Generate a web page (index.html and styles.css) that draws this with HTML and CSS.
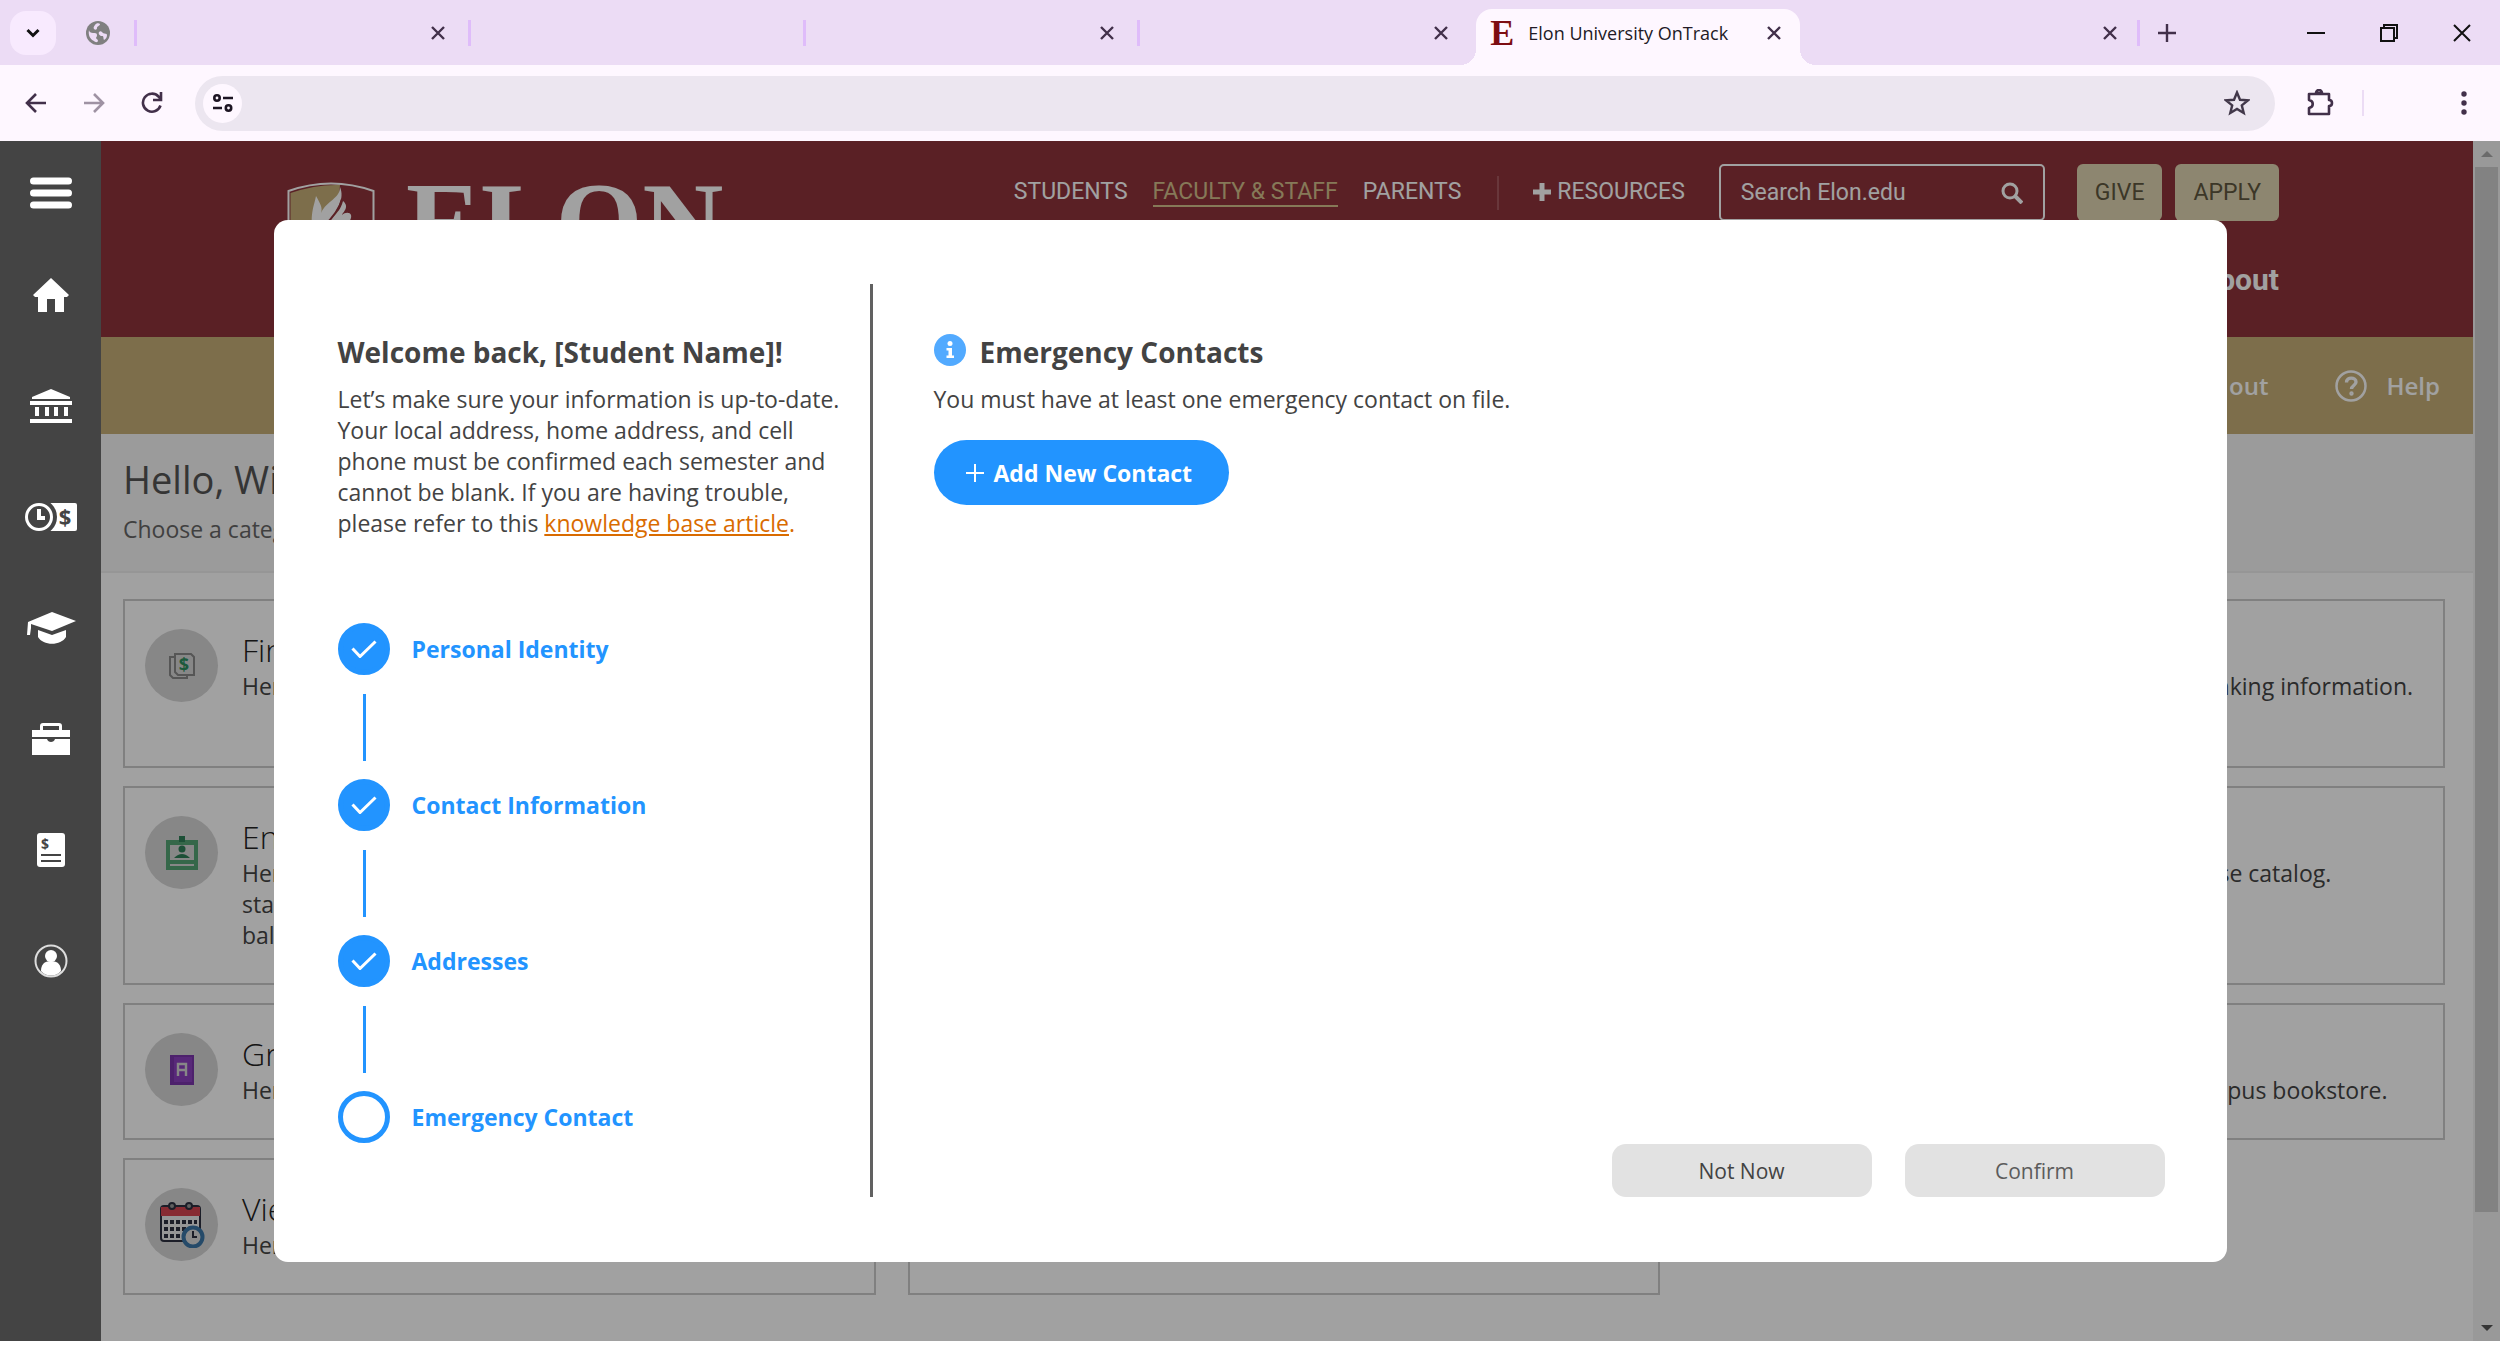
FILE: index.html
```html
<!DOCTYPE html>
<html lang="en">
<head>
    <meta charset="UTF-8">
    <meta name="viewport" content="width=device-width, initial-scale=1.0">
    <title>Elon University OnTrack</title>
    <link rel="stylesheet" href="styles.css">
</head>
<body>

    <!-- Browser frame -->
    <div class="tab-strip">
        <button class="tab-search" aria-label="Search tabs">
            <svg width="14" height="10" viewBox="0 0 14 10"><path d="M1.500 2l5.500 5.500L12.500 2" fill="none" stroke="#111" stroke-width="3"/></svg>
        </button>
        <svg class="globe" width="24" height="24" viewBox="0 0 24 24">
            <circle cx="12" cy="12" r="12" fill="#808080"/>
            <path d="M3 9c0 2 2 3 4 3s4 0 4 2-1 2-1 3 2 1 2 3c-1 2-3 1-4 0C4 18 2 14 3 9zM9 4c1-2 4-2 5-1 0 2-3 2-3 4s-2 2-3 1 0-3 1-4zM13 11c2-2 3 0 4 1s4 0 4 2-1 4-3 5c-1-2 0-4-2-4s-4-2-3-4z" fill="#eddcf6"/>
        </svg>
        <div class="tabs">
            <div class="tab"><button class="tab-close" aria-label="Close tab"><svg width="14" height="14" viewBox="0 0 14 14"><path d="M1 1l12 12M13 1L1 13"/></svg></button></div>
            <div class="tab"></div>
            <div class="tab"><button class="tab-close" aria-label="Close tab"><svg width="14" height="14" viewBox="0 0 14 14"><path d="M1 1l12 12M13 1L1 13"/></svg></button></div>
            <div class="tab"><button class="tab-close" aria-label="Close tab"><svg width="14" height="14" viewBox="0 0 14 14"><path d="M1 1l12 12M13 1L1 13"/></svg></button></div>
            <div class="tab active">
                <span class="favicon">E</span>
                <span class="tab-title">Elon University OnTrack</span>
                <button class="tab-close" aria-label="Close tab"><svg width="14" height="14" viewBox="0 0 14 14"><path d="M1 1l12 12M13 1L1 13"/></svg></button>
            </div>
            <div class="tab plain"><button class="tab-close" aria-label="Close tab"><svg width="14" height="14" viewBox="0 0 14 14"><path d="M1 1l12 12M13 1L1 13"/></svg></button></div>
        </div>
        <button class="new-tab" aria-label="New tab"><svg width="18" height="18" viewBox="0 0 18 18"><path d="M9 0v18M0 9h18" stroke="#42304a" stroke-width="2.400"/></svg></button>
        <div class="window-buttons">
            <button aria-label="Minimize"><svg width="18" height="18" viewBox="0 0 18 18"><path d="M0 9h18"/></svg></button>
            <button aria-label="Restore"><svg width="18" height="18" viewBox="0 0 18 18"><path d="M1 4h13v13H1zM4 4V1h13v13h-3"/></svg></button>
            <button aria-label="Close"><svg width="18" height="18" viewBox="0 0 18 18"><path d="M1 1l16 16M17 1L1 17"/></svg></button>
        </div>
    </div>

    <div class="toolbar">
        <button aria-label="Back"><svg width="22" height="22" viewBox="0 0 22 22"><path d="M21 11H2M11 2l-9 9 9 9"/></svg></button>
        <button class="disabled" aria-label="Forward"><svg width="22" height="22" viewBox="0 0 22 22"><path d="M1 11h19M11 2l9 9-9 9"/></svg></button>
        <button class="reload" aria-label="Reload"><svg width="22" height="22" viewBox="0 0 22 22"><path d="M19.500 13.500A9 9 0 1 1 17.500 4.500L20 7M20 0v8h-8"/></svg></button>
        <div class="address-bar">
            <span class="site-info">
                <svg width="20" height="20" viewBox="0 0 20 20" fill="none" stroke="#1d1523" stroke-width="2.600"><circle cx="4" cy="5" r="2.700"/><path d="M10 5h10M0 15h9"/><circle cx="15.500" cy="15" r="2.700"/></svg>
            </span>
            <input type="text" aria-label="Address">
            <svg class="star" width="26" height="26" viewBox="0 0 26 26"><path d="M13 2.500l3 7.300 7.800.6-6 5 1.900 7.600-6.700-4.100L6.300 23l1.900-7.600-6-5 7.800-.6z" fill="none" stroke="#42384a" stroke-width="2.400"/></svg>
        </div>
        <button class="extensions" aria-label="Extensions"><svg width="28" height="28" viewBox="0 0 28 28"><path d="M3 5h20v6c4 0 4 6 0 6v8H3v-6c5-1 5-7 0-8z" stroke-linejoin="round"/><path d="M10 4a3 3 0 0 1 6 0z" fill="#42304a"/></svg></button>
        <span class="divider"></span>
        <button class="more" aria-label="Menu"><svg width="6" height="24" viewBox="0 0 6 24"><g fill="#42304a" stroke="none"><circle cx="3" cy="3" r="2.700"/><circle cx="3" cy="12" r="2.700"/><circle cx="3" cy="21" r="2.700"/></g></svg></button>
    </div>

    <div class="viewport">

        <!-- Left icon menu -->
        <nav class="sidebar">
            <a href="#" class="menu" aria-label="Menu"><svg width="42" height="32" viewBox="0 0 42 32"><path d="M3.500 4h35M3.500 16h35M3.500 28h35" stroke="#fff" stroke-width="7" stroke-linecap="round"/></svg></a>
            <a href="#" aria-label="Home"><svg width="36" height="34" viewBox="0 0 36 34"><path d="M18 0l18 17-2 2h-3v15h-9V21h-8v13H5V19H2l-2-2z"/></svg></a>
            <a href="#" aria-label="Banking"><svg width="42" height="34" viewBox="0 0 42 34"><path d="M21 0l19 8v2H2V8zM0 12h42v4H0zM5 18h4v9H5zM15 18h4v9h-4zM24 18h4v9h-4zM34 18h4v9h-4zM0 30h42v4H0z"/></svg></a>
            <a href="#" aria-label="Time and pay">
                <svg width="52" height="30" viewBox="0 0 52 30">
                    <rect x="24" y="1" width="28" height="28" rx="2"/>
                    <circle cx="14" cy="15" r="18" fill="#444"/>
                    <circle cx="14" cy="15" r="12.500" fill="none" stroke="#fff" stroke-width="3"/>
                    <path d="M14 7v9h6" fill="none" stroke="#fff" stroke-width="4"/>
                    <text x="40" y="23" class="dollar big">$</text>
                </svg>
            </a>
            <a href="#" aria-label="Academics"><svg width="50" height="32" viewBox="0 0 50 32"><path d="M26 0l24 9-24 10L5 12v4l-1 7H1l1-13zM12 18l14 5 14-5v7c-5 9-23 9-28 0z"/></svg></a>
            <a href="#" aria-label="Employment"><svg width="38" height="32" viewBox="0 0 38 32"><path d="M8 7V3c0-2 1-3 3-3h16c2 0 3 1 3 3v4h8v7H0V7zm3 0h16V3H11zM0 16h15c1 4 7 4 8 0h15v16H0z"/></svg></a>
            <a href="#" aria-label="Statements">
                <svg width="28" height="34" viewBox="0 0 28 34">
                    <rect width="28" height="34" rx="3"/>
                    <path d="M4 22h20M4 28h20" stroke="#444" stroke-width="2"/>
                    <text x="8" y="16" class="dollar">$</text>
                </svg>
            </a>
            <a href="#" aria-label="Profile"><svg width="36" height="34" viewBox="0 0 36 34"><circle cx="18" cy="17" r="15.500" fill="none" stroke="#ddd" stroke-width="2"/><circle cx="18" cy="12" r="6"/><path d="M8 27c0-6 3-10 10-10s10 4 10 10c-5 6-15 6-20 0z"/></svg></a>
        </nav>

        <div class="page">
            <div class="site">
                <header class="site-header">
                    <div class="logo">
                        <svg width="88" height="100" viewBox="0 0 88 100">
                            <path d="M1.500 9Q44-6 86.500 9v51Q80 86 44 98 8 86 1.500 60z" fill="#8f343c" stroke="#fff" stroke-width="2"/>
                            <path d="M3.500 11Q30 2 53 3L44 96Q10 84 3.500 60z" fill="#c6af77"/>
                            <path d="M30 60C20 38 27 25 29 14c4 7 7 12 5 17C40 18 53 17 53 5c5 12-3 22-9 32 6-6 10-10 12-18 7 6 0 11-1 14 3-3 8-3 9 0 2 7-12 16-22 27z" fill="#fff"/>
                            <path d="M55 17Q52 30 36 45" fill="none" stroke="#8f343c" stroke-width="2"/>
                        </svg>
                        <span class="logo-name">ELON</span>
                    </div>
                    <div class="header-right">
                        <div class="top-links">
                            <a href="#">STUDENTS</a>
                            <a href="#" class="current">FACULTY &amp; STAFF</a>
                            <a href="#">PARENTS</a>
                            <span class="bar"></span>
                            <a href="#" class="resources"><svg width="18" height="18" viewBox="0 0 18 18"><path d="M9 0v18M0 9h18" stroke="#fff" stroke-width="5"/></svg> RESOURCES</a>
                            <div class="search">
                                <input type="text" placeholder="Search Elon.edu" aria-label="Search Elon.edu">
                                <svg width="22" height="22" viewBox="0 0 22 22" fill="none" stroke="#fff"><circle cx="9" cy="9" r="7" stroke-width="3"/><path d="M14 14l7 7" stroke-width="4"/></svg>
                            </div>
                            <button class="gold-btn">GIVE</button>
                            <button class="gold-btn">APPLY</button>
                        </div>
                        <a href="#" class="about">About</a>
                    </div>
                </header>

                <div class="gold-bar">
                    <a href="#">Sign out</a>
                    <a href="#" class="help">
                        <svg width="32" height="32" viewBox="0 0 32 32" fill="none" stroke="#fff"><circle cx="16" cy="16" r="14.500" stroke-width="2.500"/><path d="M11.500 12.500c0-6 9.500-5.500 9.500-.5 0 3.500-4.500 3.500-4.500 7" stroke-width="3.400"/><circle cx="16.500" cy="23.500" r="1.200" stroke-width="2"/></svg>
                        Help
                    </a>
                </div>

                <div class="greeting">
                    <h1>Hello, Will</h1>
                    <p>Choose a category</p>
                </div>

                <div class="cards">
                    <div class="card tall">
                        <span class="card-icon">
                            <svg width="26" height="26" viewBox="0 0 26 26"><path d="M6 4H1v18l3 3h14v-3" fill="none" stroke="#888" stroke-width="2"/><path d="M6 1h16l3 3v18H9l-3-3z" fill="#d6d6d6" stroke="#888" stroke-width="2"/><text x="15" y="18" class="dollar green">$</text></svg>
                        </span>
                        <div><h2>Finances</h2><p>Here you can view your balance.</p></div>
                    </div>
                    <div class="card"></div>
                    <div class="card">
                        <div class="card-text"><h2>Payroll</h2><p>Here you can update payment and banking information.</p></div>
                    </div>

                    <div class="card">
                        <span class="card-icon">
                            <svg width="32" height="34" viewBox="0 0 32 34"><path d="M0 4h32v30H0zM4 9v15h24V9zM4 28v2h24v-2z" fill="#54a374" fill-rule="evenodd"/><path d="M13 0h6v6h-6z" fill="#2f7f58"/><circle cx="16" cy="13" r="3.500" fill="#2f7f58"/><path d="M8 22q8-8 16 0z" fill="#2f7f58"/></svg>
                        </span>
                        <div><h2>Enrollment</h2><p>Here you can view pay<br>statements and leave<br>balances.</p></div>
                    </div>
                    <div class="card"></div>
                    <div class="card">
                        <div class="card-text"><h2>Courses</h2><p>Here you can browse the current course catalog.</p></div>
                    </div>

                    <div class="card">
                        <span class="card-icon">
                            <svg width="24" height="30" viewBox="0 0 24 30"><path d="M0 0h24v30H0z" fill="#7a35ac"/><path d="M4 2h18v25H4z" fill="#8c40c0"/><path d="M8 21V9h8v12M8 15h8" fill="none" stroke="#d6d6d6" stroke-width="2.400"/></svg>
                        </span>
                        <div><h2>Grades</h2><p>Here you can view grades.</p></div>
                    </div>
                    <div class="card"></div>
                    <div class="card">
                        <div class="card-text"><h2>Books</h2><p>Here you can order texts from the campus bookstore.</p></div>
                    </div>

                    <div class="card">
                        <span class="card-icon">
                            <svg width="46" height="46" viewBox="0 0 46 46"><rect x="2" y="4" width="39" height="35" rx="3" fill="#eee" stroke="#2d3040" stroke-width="2"/><path d="M2 5h39v9H2z" fill="#d64550"/><path d="M5 20h33M5 27h33M5 34h22" stroke="#2d3040" stroke-width="4" stroke-dasharray="4 2"/><g fill="#999" stroke="#2d3040" stroke-width="2"><circle cx="13" cy="4" r="3"/><circle cx="30" cy="4" r="3"/></g><circle cx="34" cy="35" r="9.500" fill="#ddd" stroke="#3b76a6" stroke-width="4"/><path d="M34 29v6h4" fill="none" stroke="#2d3040" stroke-width="2"/></svg>
                        </span>
                        <div><h2>View Calendar</h2><p>Here you can view the daily events.</p></div>
                    </div>
                    <div class="card">
                        <span class="card-icon"></span>
                        <div><h2>Earnings</h2><p>Download pay stubs and earnings.</p></div>
                    </div>
                </div>
            </div>
            <div class="scrollbar">
                <svg width="12" height="6" viewBox="0 0 12 6"><path d="M0 6l6-6 6 6z" fill="#aaa"/></svg>
                <div class="track"><div class="thumb"></div></div>
                <svg width="12" height="6" viewBox="0 0 12 6"><path d="M0 0h12L6 6z" fill="#555"/></svg>
            </div>
        </div>

        <!-- Confirm information box -->
        <div class="modal-layer">
            <div class="modal" role="dialog" aria-labelledby="welcome-title">
                <div class="modal-left">
                    <h2 id="welcome-title">Welcome back, [Student Name]!</h2>
                    <p>Let’s make sure your information is up-to-date.<br>Your local address, home address, and cell<br>phone must be confirmed each semester and<br>cannot be blank. If you are having trouble,<br>please refer to this <span class="orange"><a href="#">knowledge base article</a>.</span></p>
                    <ol class="steps">
                        <li class="done"><span class="dot"><svg width="26" height="18" viewBox="0 0 26 18"><path d="M1.500 8.500l7.500 8L24.500 1.500" fill="none" stroke="#fff" stroke-width="3"/></svg></span>Personal Identity</li>
                        <li class="done"><span class="dot"><svg width="26" height="18" viewBox="0 0 26 18"><path d="M1.500 8.500l7.500 8L24.500 1.500" fill="none" stroke="#fff" stroke-width="3"/></svg></span>Contact Information</li>
                        <li class="done"><span class="dot"><svg width="26" height="18" viewBox="0 0 26 18"><path d="M1.500 8.500l7.500 8L24.500 1.500" fill="none" stroke="#fff" stroke-width="3"/></svg></span>Addresses</li>
                        <li><span class="dot"></span>Emergency Contact</li>
                    </ol>
                </div>
                <div class="modal-right">
                    <div class="contact-title">
                        <svg width="32" height="32" viewBox="0 0 32 32"><circle cx="16" cy="16" r="16" fill="#52aaff"/><circle cx="16" cy="9.500" r="2.500" fill="#fff"/><path d="M12.500 14h5.500v7.500h2V24h-7.500v-2.500h2v-5h-2z" fill="#fff"/></svg>
                        <h2>Emergency Contacts</h2>
                    </div>
                    <p>You must have at least one emergency contact on file.</p>
                    <button class="add-btn"><svg width="18" height="18" viewBox="0 0 18 18"><path d="M9 0v18M0 9h18" stroke="#fff" stroke-width="2"/></svg>Add New Contact</button>
                    <div class="modal-buttons">
                        <button id="not-now">Not Now</button>
                        <button id="confirm" class="confirm">Confirm</button>
                    </div>
                </div>
            </div>
        </div>
    </div>

</body>
</html>
```
FILE: styles.css
```css
* {
  margin: 0;
  padding: 0;
  box-sizing: border-box;
}
body {
  font-family: "Open Sans", sans-serif;
  font-size: 23px;
  height: 100vh;
  display: flex;
  flex-direction: column;
  background-color: #fff;
  overflow: hidden;
  padding-bottom: 13px;
}
button {
  font-family: inherit;
  border: none;
  background: none;
  cursor: pointer;
}
a {
  color: inherit;
  text-decoration: none;
}
input {
  font-family: inherit;
  border: none;
  background: none;
  outline: none;
}
svg {
  display: block;
  flex-shrink: 0;
}

/* Tab strip */
.tab-strip {
  display: flex;
  align-items: center;
  height: 65px;
  padding-left: 10px;
  background-color: #ecdcf5;
  flex-shrink: 0;
}
.tab-search {
  display: flex;
  align-items: center;
  justify-content: center;
  width: 46px;
  height: 44px;
  border-radius: 16px;
  background-color: #f8eafe;
}
.globe {
  margin: 0 24px 0 30px;
}
.tabs {
  display: grid;
  grid-template-columns: repeat(6, 1fr);
  flex: 1;
  align-self: stretch;
}
.tab {
  display: flex;
  align-items: center;
  justify-content: flex-end;
  padding-right: 23px;
  /* short divider at the left edge of each tab */
  background: linear-gradient(#dfbcfa, #dfbcfa) no-repeat left center / 3px 26px;
}
.tab.plain {
  background: linear-gradient(#dfbcfa, #dfbcfa) no-repeat right center / 3px 26px;
}
.tab.active {
  position: relative;
  justify-content: flex-start;
  background: #fef7ff;
  border-radius: 16px 16px 0 0;
  margin: 9px 6px 0 5px;
  padding: 0 19px 9px 14px;
}
.tab.active::before,
.tab.active::after {
  content: "";
  position: absolute;
  bottom: 0;
  width: 16px;
  height: 16px;
}
.tab.active::before {
  left: -16px;
  background: radial-gradient(circle at 0 0, transparent 16px, #fef7ff 16px);
}
.tab.active::after {
  right: -16px;
  background: radial-gradient(circle at 100% 0, transparent 16px, #fef7ff 16px);
}
.favicon {
  width: 24px;
  margin-right: 14px;
  font-family: "Liberation Serif", serif;
  font-size: 36px;
  line-height: 36px;
  font-weight: bold;
  color: #7d0d12;
}
.tab-title {
  flex: 1;
  font-size: 18px;
  color: #221a26;
  white-space: nowrap;
}
.tab-close path {
  stroke: #42304a;
  stroke-width: 2.4;
}
.new-tab {
  margin-left: 18px;
}
.window-buttons {
  display: flex;
  gap: 55px;
  margin: 0 29px 0 131px;
}
.window-buttons path {
  fill: none;
  stroke: #111;
  stroke-width: 2;
}

/* Toolbar */
.toolbar {
  display: flex;
  align-items: center;
  height: 76px;
  padding: 0 33px 0 25px;
  background-color: #fef7ff;
  flex-shrink: 0;
}
.toolbar button {
  margin-right: 36px;
}
.toolbar button path {
  fill: none;
  stroke: #42304a;
  stroke-width: 2.6;
}
.toolbar .disabled {
  opacity: 0.5;
}
.toolbar .reload {
  margin-right: 32px;
}
.address-bar {
  flex: 1;
  display: flex;
  align-items: center;
  height: 55px;
  padding: 0 25px 0 8px;
  border-radius: 28px;
  background-color: #ece6f0;
}
.address-bar input {
  flex: 1;
  font-size: 18px;
}
.site-info {
  display: flex;
  align-items: center;
  justify-content: center;
  width: 39px;
  height: 39px;
  border-radius: 50%;
  background-color: #fef7ff;
}
.toolbar .extensions {
  margin: 0 28px 0 31px;
}
.divider {
  width: 2px;
  height: 26px;
  margin-right: 97px;
  background-color: #ecdcf5;
}
.toolbar .more {
  margin-right: 0;
}

/* Page area */
.viewport {
  flex: 1;
  position: relative;
  display: flex;
  min-height: 0;
}
.sidebar {
  width: 101px;
  background-color: #444;
  flex-shrink: 0;
}
.sidebar a {
  display: flex;
  align-items: center;
  justify-content: center;
  height: 111px;
}
.sidebar .menu {
  height: 98px;
  padding-top: 5px;
}
.sidebar svg {
  fill: #fff;
}
.sidebar .dollar {
  fill: #444;
}
.dollar {
  font-family: "Open Sans", sans-serif;
  font-size: 14px;
  font-weight: bold;
  text-anchor: middle;
}
.dollar.big {
  font-size: 22px;
}
.dollar.green {
  font-size: 18px;
  fill: #2f8f60;
}
.page {
  flex: 1;
  position: relative;
  display: flex;
  background-color: #fff;
}
/* dark layer over the page */
.page::after {
  content: "";
  position: absolute;
  inset: 0;
  background-color: rgba(0, 0, 0, 0.37);
}
.site {
  flex: 1;
}
.site-header {
  display: flex;
  justify-content: space-between;
  height: 196px;
  padding: 23px 194px 0 186px;
  background-color: #8f343c;
  color: #fff;
}
.logo {
  display: flex;
  gap: 31px;
  padding-top: 18px;
}
.logo-name {
  font-family: "Liberation Serif", serif;
  font-size: 112px;
  line-height: 80px;
  font-weight: bold;
}
.header-right {
  font-family: Roboto, sans-serif;
  text-align: right;
}
.top-links {
  display: flex;
  align-items: center;
}
.top-links a {
  margin-right: 25px;
  border-bottom: 2px solid transparent;
}
.top-links .current {
  color: #d4c08c;
  border-color: #d4c08c;
}
.bar {
  width: 2px;
  height: 34px;
  margin: 0 34px 0 11px;
  background-color: #a6575e;
}
.top-links .resources {
  display: flex;
  align-items: center;
  gap: 6px;
  margin-right: 34px;
}
.search {
  display: flex;
  align-items: center;
  width: 326px;
  height: 57px;
  margin-right: 32px;
  padding: 0 20px;
  border: 2px solid #fff;
  border-radius: 5px;
}
.search input {
  flex: 1;
  min-width: 0;
  font-size: 23px;
}
.search input::placeholder {
  color: #fff;
}
.gold-btn {
  height: 57px;
  padding: 0 18px;
  border-radius: 6px;
  background-color: #e0d5b2;
  font-size: 23px;
  color: #5f573f;
}
.gold-btn + .gold-btn {
  margin-left: 13px;
}
.about {
  display: block;
  margin-top: 41px;
  font-size: 30px;
  font-weight: 700;
}
.gold-bar {
  display: flex;
  align-items: center;
  justify-content: flex-end;
  gap: 66px;
  height: 97px;
  padding-right: 33px;
  background-color: #c6af77;
  color: #fff;
  font-size: 24px;
  font-weight: 600;
}
.help {
  display: flex;
  align-items: center;
  gap: 20px;
}
.greeting {
  height: 139px;
  padding: 19px 22px;
  background-color: #f6f6f6;
  border-bottom: 2px solid #eee;
  color: #666;
}
.greeting h1 {
  font-size: 38px;
  line-height: 52px;
  font-weight: 400;
  color: #555;
}
.greeting p {
  line-height: 48px;
}
.cards {
  display: grid;
  grid-template-columns: repeat(3, 1fr);
  gap: 18px 32px;
  padding: 26px 28px 0 22px;
}
.card {
  display: flex;
  gap: 24px;
  padding: 28px 18px 32px 20px;
  border: 2px solid #cbcbcb;
  color: #444;
  line-height: 31px;
}
.card.tall {
  min-height: 169px;
}
.card h2 {
  font-size: 32px;
  line-height: 42px;
  font-weight: 300;
  color: #222;
}
.card p {
  white-space: nowrap;
}
.card-icon {
  display: flex;
  align-items: center;
  justify-content: center;
  width: 73px;
  height: 73px;
  border-radius: 50%;
  background-color: #d6d6d6;
  flex-shrink: 0;
}
.card-text {
  padding-left: 97px;
}
.scrollbar {
  display: flex;
  flex-direction: column;
  align-items: center;
  gap: 10px;
  width: 27px;
  padding: 10px 0;
  background-color: #f3f3f3;
}
.track {
  flex: 1;
}
.thumb {
  width: 23px;
  height: 91%;
  background-color: #cecece;
}

/* Modal */
.modal-layer {
  position: absolute;
  inset: 0;
  display: flex;
  justify-content: center;
  padding: 79px 0;
}
.modal {
  display: flex;
  width: calc(100% - 547px);
  padding: 64px 62px 65px 64px;
  border-radius: 14px;
  background-color: #fff;
  color: #434343;
}
.modal h2 {
  font-size: 28px;
  line-height: 36px;
  font-weight: 700;
}
.modal p {
  line-height: 31px;
  white-space: nowrap;
}
.modal-left {
  width: 535px;
  padding-top: 50px;
  border-right: 3px solid #616161;
}
.modal-left h2,
.contact-title {
  margin-bottom: 14px;
}
.orange {
  color: #d96b00;
}
.orange a {
  text-decoration: underline;
}
.steps {
  list-style: none;
  margin-top: 84px;
  color: #2294ff;
  font-weight: 700;
}
.steps li {
  position: relative;
  display: flex;
  align-items: center;
  gap: 22px;
  height: 52px;
  margin-bottom: 104px;
}
/* line down to the next step */
.steps .done::after {
  content: "";
  position: absolute;
  top: 71px;
  left: 25px;
  width: 3px;
  height: 67px;
  background-color: #2294ff;
}
.dot {
  display: flex;
  align-items: center;
  justify-content: center;
  width: 52px;
  height: 52px;
  border: 5px solid #2294ff;
  border-radius: 50%;
}
.done .dot {
  background-color: #2294ff;
}
.modal-right {
  flex: 1;
  display: flex;
  flex-direction: column;
  align-items: flex-start;
  padding: 50px 0 0 61px;
}
.contact-title {
  display: flex;
  gap: 14px;
}
.add-btn {
  display: flex;
  align-items: center;
  gap: 10px;
  height: 65px;
  margin-top: 25px;
  padding: 0 37px 0 32px;
  border-radius: 33px;
  background-color: #2294ff;
  color: #fff;
  font-size: 23px;
  font-weight: 700;
}
.modal-buttons {
  display: flex;
  gap: 33px;
  margin-top: auto;
  align-self: flex-end;
}
.modal-buttons button {
  width: 260px;
  height: 53px;
  border-radius: 14px;
  background-color: #e2e2e2;
  color: #434343;
  font-size: 21px;
}
.modal-buttons .confirm {
  color: #5c5c5c;
}
```
